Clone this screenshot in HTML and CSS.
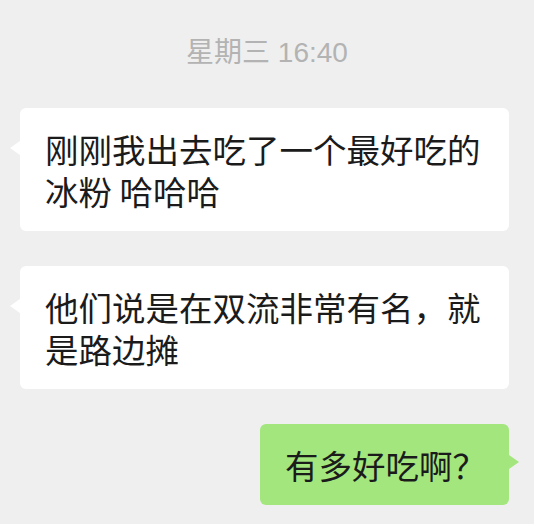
FILE: index.html
```html
<!DOCTYPE html>
<html lang="zh-CN">
<head>
  <meta charset="UTF-8" />
  <title>聊天</title>
  <meta name="viewport" content="width=device-width, initial-scale=1.0" />
  <link rel="stylesheet" href="styles.css">
</head>
<body>

<div class="chat">
  <div class="time">星期三 16:40</div>

  <div class="messages">
    <div class="row left">
      <div class="bubble">刚刚我出去吃了一个最好吃的冰粉 哈哈哈</div>
    </div>
    <div class="row left">
      <div class="bubble">他们说是在双流非常有名，就是路边摊</div>
    </div>
    <div class="row right">
      <div class="bubble mine">有多好吃啊？</div>
    </div>
  </div>
</div>

</body>
</html>
```

FILE: styles.css
```css
body {
  margin: 0;
  background: #efefef;
  font-family: "Noto Sans CJK SC", "Noto Sans", sans-serif;
}
.chat {
  padding-top: 35px;
}
.time {
  text-align: center;
  font-family: "Liberation Sans", "Noto Sans CJK SC", sans-serif;
  font-size: 28px;
  line-height: 36px;
  color: #b3b3b3;
  margin-bottom: 37px;
}
.messages {
  display: flex;
  flex-direction: column;
  gap: 35px;
}
.row {
  display: flex;
  padding: 0 25px 0 20px;
}
.row.right {
  justify-content: flex-end;
}
.bubble {
  position: relative;
  max-width: 100%;
  box-sizing: border-box;
  background: #fff;
  color: #1b1b1b;
  font-size: 33.5px;
  line-height: 42px;
  padding: 20px 25px 19px;
  border-radius: 6px;
}
.left .bubble::before {
  content: "";
  position: absolute;
  left: -10px;
  top: 33px;
  border-top: 7px solid transparent;
  border-bottom: 7px solid transparent;
  border-right: 10px solid #fff;
}
.bubble.mine {
  padding-right: 23px;
  background: #a3e67d;
}
.bubble.mine::after {
  content: "";
  position: absolute;
  right: -10px;
  top: 31px;
  border-top: 7px solid transparent;
  border-bottom: 7px solid transparent;
  border-left: 10px solid #a3e67d;
}
```
